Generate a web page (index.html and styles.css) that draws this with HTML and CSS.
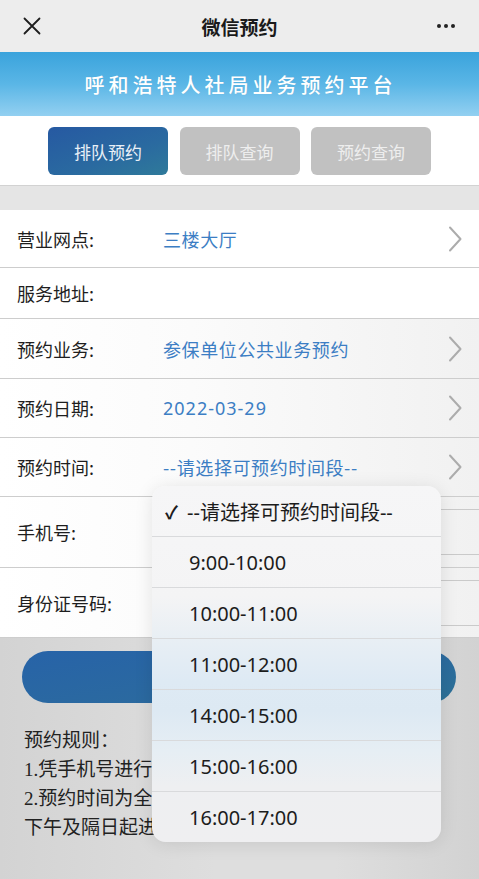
FILE: index.html
```html
<!DOCTYPE html>
<html lang="zh-CN">
<head>
<meta charset="utf-8">
<title>微信预约</title>
<link rel="stylesheet" href="styles.css">
</head>
<body>
<div class="page">
  <header class="navbar">
    <span class="nav-close">
      <svg width="18" height="18" viewBox="0 0 18 18"><path d="M1.5 1.5 L16.5 16.5 M16.5 1.5 L1.5 16.5" stroke="#1e1e1e" stroke-width="1.8" fill="none" stroke-linecap="round"/></svg>
    </span>
    <h1 class="nav-title">微信预约</h1>
    <span class="nav-more"><i></i><i></i><i></i></span>
  </header>

  <div class="banner">呼和浩特人社局业务预约平台</div>

  <nav class="tabs">
    <a class="tab tab-active">排队预约</a>
    <a class="tab">排队查询</a>
    <a class="tab">预约查询</a>
  </nav>

  <div class="spacer"></div>

  <section class="form">
    <div class="row h58"><span class="label">营业网点:</span><span class="value">三楼大厅</span><svg class="chev" viewBox="0 0 14 26"><path d="M2 1.5 L12.5 13 L2 24.5" fill="none" stroke="#acacac" stroke-width="2" stroke-linecap="round" stroke-linejoin="round"/></svg></div>
    <div class="row h51"><span class="label">服务地址:</span></div>
    <div class="row h60 dim"><span class="label">预约业务:</span><span class="value">参保单位公共业务预约</span><svg class="chev" viewBox="0 0 14 26"><path d="M2 1.5 L12.5 13 L2 24.5" fill="none" stroke="#acacac" stroke-width="2" stroke-linecap="round" stroke-linejoin="round"/></svg></div>
    <div class="row h59 dim"><span class="label">预约日期:</span><span class="value num">2022-03-29</span><svg class="chev" viewBox="0 0 14 26"><path d="M2 1.5 L12.5 13 L2 24.5" fill="none" stroke="#acacac" stroke-width="2" stroke-linecap="round" stroke-linejoin="round"/></svg></div>
    <div class="row h59 dim"><span class="label">预约时间:</span><span class="value">--请选择可预约时间段--</span><svg class="chev" viewBox="0 0 14 26"><path d="M2 1.5 L12.5 13 L2 24.5" fill="none" stroke="#acacac" stroke-width="2" stroke-linecap="round" stroke-linejoin="round"/></svg></div>
    <div class="row h71 dim"><span class="label">手机号:</span><span class="input"></span></div>
    <div class="row h70 dim"><span class="label">身份证号码:</span><span class="input"></span></div>
  </section>

  <section class="bottom">
    <div class="submit">提交预约</div>
    <div class="rules">
      <p>预约规则：</p>
      <p>1.凭手机号进行预约，每个手机号每天限约一次。</p>
      <p>2.预约时间为全天，每个工作日上午均可预约当日下午及隔日起进行办理的业务。</p>
    </div>
  </section>

  <ul class="picker">
    <li class="picked"><span class="check">✓</span>--请选择可预约时间段--</li>
    <li>9:00-10:00</li>
    <li>10:00-11:00</li>
    <li>11:00-12:00</li>
    <li>14:00-15:00</li>
    <li>15:00-16:00</li>
    <li>16:00-17:00</li>
  </ul>
</div>
</body>
</html>
```

FILE: styles.css
```css
* { box-sizing: border-box; }
html, body { margin: 0; padding: 0; }
body {
  width: 479px;
  height: 879px;
  overflow: hidden;
  font-family: "Noto Sans", "Noto Sans CJK SC", sans-serif;
  background: #d9d9d9;
}
.page { position: relative; width: 479px; height: 879px; }

.navbar {
  height: 52px;
  background: #ededed;
  display: grid;
  grid-template-columns: 64px 1fr 64px;
  align-items: center;
}
.nav-close { padding-left: 23px; display: flex; align-items: center; }
.nav-title {
  margin: 0;
  text-align: center;
  font-size: 19px;
  font-weight: 600;
  color: #1a1a1a;
  font-family: "Noto Sans CJK SC", sans-serif;
}
.nav-more { display: flex; gap: 3px; justify-content: flex-end; padding-right: 24px; }
.nav-more i { width: 4px; height: 4px; border-radius: 50%; background: #222; display: block; }

.banner {
  height: 64px;
  background: linear-gradient(to bottom, #3aa3dc 0%, #5ab6e6 50%, #93d0f1 100%);
  color: #fff;
  font-family: "Noto Sans CJK SC", sans-serif;
  font-size: 20px;
  font-weight: 500;
  letter-spacing: 4px;
  display: flex;
  align-items: center;
  justify-content: center;
  padding-left: 2px;
  text-shadow: 0 0 1px rgba(0,0,0,0.1);
}

.tabs {
  height: 69px;
  background: #fff;
  display: flex;
  justify-content: center;
  gap: 11.5px;
  padding-top: 11px;
}
.tab {
  width: 120px;
  height: 48px;
  border-radius: 6px;
  background: #c1c1c1;
  color: #eeeeee;
  font-family: "Noto Sans CJK SC", sans-serif;
  font-size: 17px;
  display: flex;
  align-items: center;
  justify-content: center;
}
.tab-active {
  background: linear-gradient(160deg, #2659a2 0%, #2a6aa0 60%, #2f7a9a 100%);
  color: #e9f0f7;
}

.spacer {
  height: 25px;
  background: #e5e5e5;
  border-top: 1px solid #d2d2d2;
}

.form { background: #fff; }
.row {
  display: flex;
  align-items: center;
  padding-left: 17px;
  border-bottom: 1.5px solid #cdcdcd;
  font-family: "Noto Sans CJK SC", sans-serif;
  font-size: 18px;
  position: relative;
}
.dim { background: linear-gradient(to right, #ffffff 0%, #fbfbfb 40%, #f1f1f1 100%); }
.h58 { height: 58px; }
.h51 { height: 51px; }
.h60 { height: 60px; }
.h59 { height: 59px; }
.h71 { height: 71px; }
.h70 { height: 70px; }
.label { width: 146px; color: #1e1e1e; flex: none; }
.value { color: #3c7ec4; flex: 1; letter-spacing: 0.6px; }
.value.num { font-family: "Noto Sans", sans-serif; letter-spacing: 1px; }
.chev {
  width: 14px;
  height: 26px;
  margin-right: 17px;
  flex: none;
}
.input {
  flex: 1;
  height: 46px;
  border: 1.5px solid #cacaca;
  border-right: none;
}

.bottom {
  height: 241px;
  padding: 13px 23px 0 22px;
  background: linear-gradient(to right, #d3d3d3 0%, #dedede 45%, #dedede 70%, #d2d2d2 100%);
}
.submit {
  height: 52px;
  border-radius: 26px;
  background: linear-gradient(170deg, #2763a8 0%, #2b6a9f 60%, #2c7196 100%);
  color: #fff;
  font-family: "Noto Sans CJK SC", sans-serif;
  font-size: 18px;
  display: flex;
  align-items: center;
  justify-content: center;
}
.rules {
  margin-top: 23px;
  padding-left: 2px;
  font-family: "Liberation Serif", "Noto Sans CJK SC", serif;
  font-size: 19px;
  line-height: 29px;
  color: #222;
}
.rules p { margin: 0; }

.picker {
  position: absolute;
  left: 152px;
  top: 486px;
  width: 289px;
  margin: 0;
  padding: 0;
  list-style: none;
  border-radius: 14px;
  overflow: hidden;
  background: linear-gradient(to bottom,
    #f6f6f7 0px, #f4f4f5 110px, #e9eff4 150px, #deeaf4 195px,
    #dde9f3 225px, #e6eef4 265px, #eeeff1 300px, #efeff1 355px);
  box-shadow: 0 2px 18px rgba(0,0,0,0.10);
  font-family: "Noto Sans", "Noto Sans CJK SC", sans-serif;
  font-size: 20px;
  color: #1c1c1c;
}
.picker li {
  height: 51px;
  display: flex;
  align-items: center;
  padding-left: 37px;
  border-top: 1px solid #d9dadc;
}
.picker li.picked {
  height: 50px;
  border-top: none;
  padding-left: 13px;
}
.check { width: 22px; font-size: 18px; font-weight: 700; }
```
